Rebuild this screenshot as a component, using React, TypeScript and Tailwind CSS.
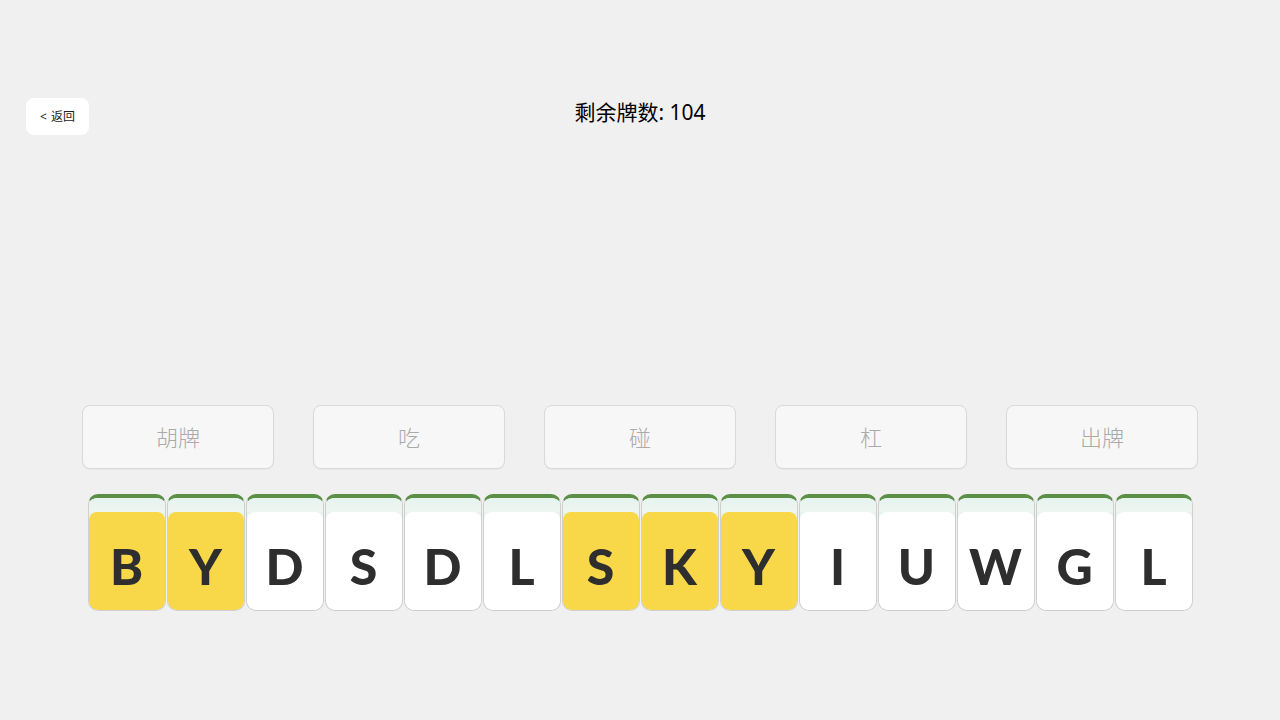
import React from 'react';

const tiles: { ch: string; gold: boolean }[] = [
  { ch: 'B', gold: true },
  { ch: 'Y', gold: true },
  { ch: 'D', gold: false },
  { ch: 'S', gold: false },
  { ch: 'D', gold: false },
  { ch: 'L', gold: false },
  { ch: 'S', gold: true },
  { ch: 'K', gold: true },
  { ch: 'Y', gold: true },
  { ch: 'I', gold: false },
  { ch: 'U', gold: false },
  { ch: 'W', gold: false },
  { ch: 'G', gold: false },
  { ch: 'L', gold: false },
];

const actions = ['胡牌', '吃', '碰', '杠', '出牌'];

const Tile = ({ ch, gold }: { ch: string; gold: boolean }) => (
  <div className="w-[78px] h-[117px] rounded-[10px] border-t-[4px] border-t-[#5b8f45] border-x border-b border-x-[#cfcfcf] border-b-[#cfcfcf] bg-[#e9f4ef] flex flex-col overflow-hidden">
    <div className="h-[14px] shrink-0 bg-gradient-to-b from-[#e6f3ee] to-[#eef6f2]" />
    <div
      className={
        gold
          ? 'flex-1 rounded-[8px] bg-[#f8d848] flex items-center justify-center pt-[10px]'
          : 'flex-1 rounded-[8px] bg-white flex items-center justify-center pt-[10px]'
      }
    >
      <span className="text-[50px] leading-none font-black text-[#2e2e2e] font-['Lato',sans-serif]">{ch}</span>
    </div>
  </div>
);

const App = () => {
  return (
    <div className="w-full h-[720px] bg-[#f0f0f0] font-['Noto_Sans','Noto_Sans_CJK_SC',sans-serif] flex flex-col">
      {/* Header */}
      <div className="grid grid-cols-[1fr_auto_1fr] items-center px-[26px] pt-[98px]">
        <div>
          <button className="w-[63px] h-[37px] bg-white rounded-[8px] text-[12px] text-[#222] flex items-center justify-center gap-1">
            <span>&lt;</span>
            <span>返回</span>
          </button>
        </div>
        <div className="text-[21px] text-black -mt-[7px]">剩余牌数: 104</div>
        <div />
      </div>

      {/* Action buttons */}
      <div className="flex justify-center gap-[39px] mt-[270px]">
        {actions.map((a) => (
          <button
            key={a}
            className="w-[192px] h-[64px] bg-[#f7f7f7] border border-[#d9d9d9] rounded-[8px] text-[22px] font-light text-[#aaaaaa] shadow-[0_1px_1px_rgba(0,0,0,0.04)]"
          >
            {a}
          </button>
        ))}
      </div>

      {/* Hand */}
      <div className="flex justify-center gap-[1px] mt-[25px]">
        {tiles.map((t, i) => (
          <Tile key={i} ch={t.ch} gold={t.gold} />
        ))}
      </div>
    </div>
  );
};

export default App;
